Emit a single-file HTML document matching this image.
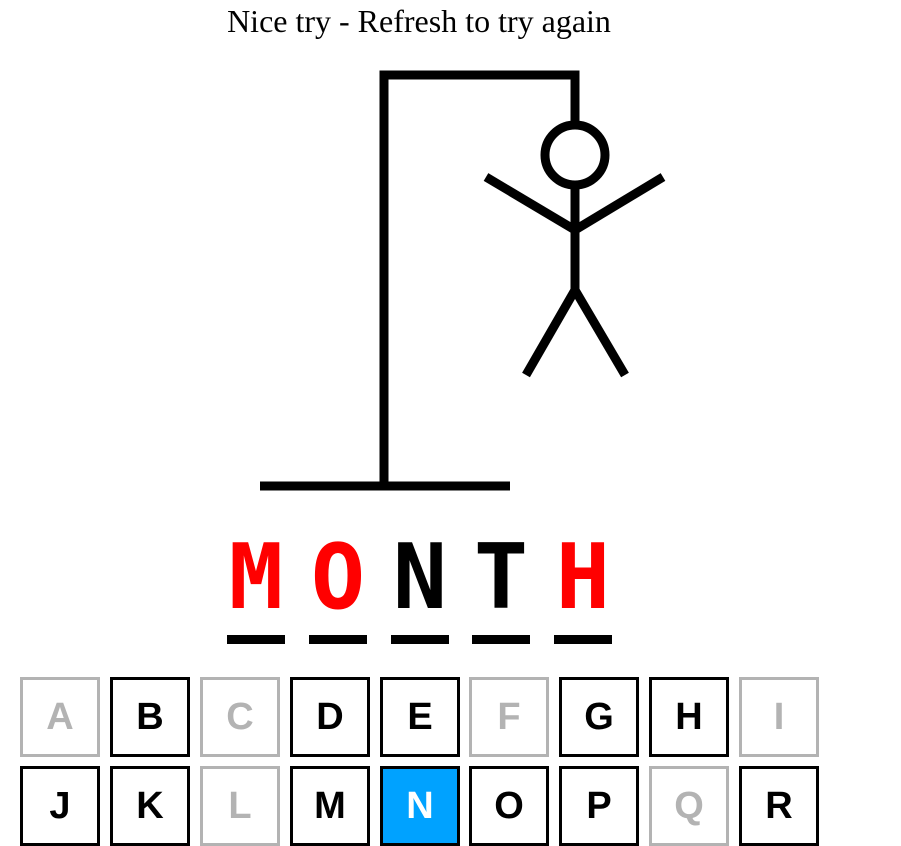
<!DOCTYPE html>
<html><head><style>
body{margin:0;width:901px;height:835px;overflow:hidden;background:#fff;position:relative}
.t{position:absolute;left:0;width:838px;top:3px;text-align:center;font:32px "Liberation Serif",serif}
.l{position:absolute;top:533px;width:58px;text-align:center;font:bold 90px "DejaVu Sans Mono",monospace;line-height:90px}
.u{position:absolute;top:635px;width:58px;height:9px;background:#000}
.k{position:absolute;width:74px;height:74px;border:3px solid #000;box-sizing:content-box;font:bold 38px "Liberation Sans",sans-serif;text-align:center;line-height:74px}
.g{border-color:#b3b3b3;color:#b3b3b3}
.n{background:#00a2ff;color:#fff}
</style></head><body>
<div class="t">Nice try - Refresh to try again</div>
<svg width="901" height="520" style="position:absolute;left:0;top:0" fill="none" stroke="#000" stroke-width="9">
<line x1="260" y1="486" x2="510" y2="486"/>
<polyline points="384,486 384,75 575,75 575,125"/>
<circle cx="575" cy="155" r="30"/>
<line x1="575" y1="185" x2="575" y2="290"/>
<line x1="575" y1="230" x2="486" y2="177"/>
<line x1="575" y1="230" x2="663" y2="177"/>
<line x1="575" y1="290" x2="526" y2="375"/>
<line x1="575" y1="290" x2="625" y2="375"/>
</svg>
<div class="l" style="left:227px;color:#f00">M</div>
<div class="l" style="left:309px;color:#f00">O</div>
<div class="l" style="left:391px">N</div>
<div class="l" style="left:472px">T</div>
<div class="l" style="left:554px;color:#f00">H</div>
<div class="u" style="left:227px"></div><div class="u" style="left:309px"></div><div class="u" style="left:391px"></div><div class="u" style="left:472px"></div><div class="u" style="left:554px"></div>
<div class="k g" style="left:20px;top:677px">A</div>
<div class="k" style="left:110px;top:677px">B</div>
<div class="k g" style="left:200px;top:677px">C</div>
<div class="k" style="left:290px;top:677px">D</div>
<div class="k" style="left:380px;top:677px">E</div>
<div class="k g" style="left:469px;top:677px">F</div>
<div class="k" style="left:559px;top:677px">G</div>
<div class="k" style="left:649px;top:677px">H</div>
<div class="k g" style="left:739px;top:677px">I</div>
<div class="k" style="left:20px;top:766px">J</div>
<div class="k" style="left:110px;top:766px">K</div>
<div class="k g" style="left:200px;top:766px">L</div>
<div class="k" style="left:290px;top:766px">M</div>
<div class="k n" style="left:380px;top:766px">N</div>
<div class="k" style="left:469px;top:766px">O</div>
<div class="k" style="left:559px;top:766px">P</div>
<div class="k g" style="left:649px;top:766px">Q</div>
<div class="k" style="left:739px;top:766px">R</div>
</body></html>
